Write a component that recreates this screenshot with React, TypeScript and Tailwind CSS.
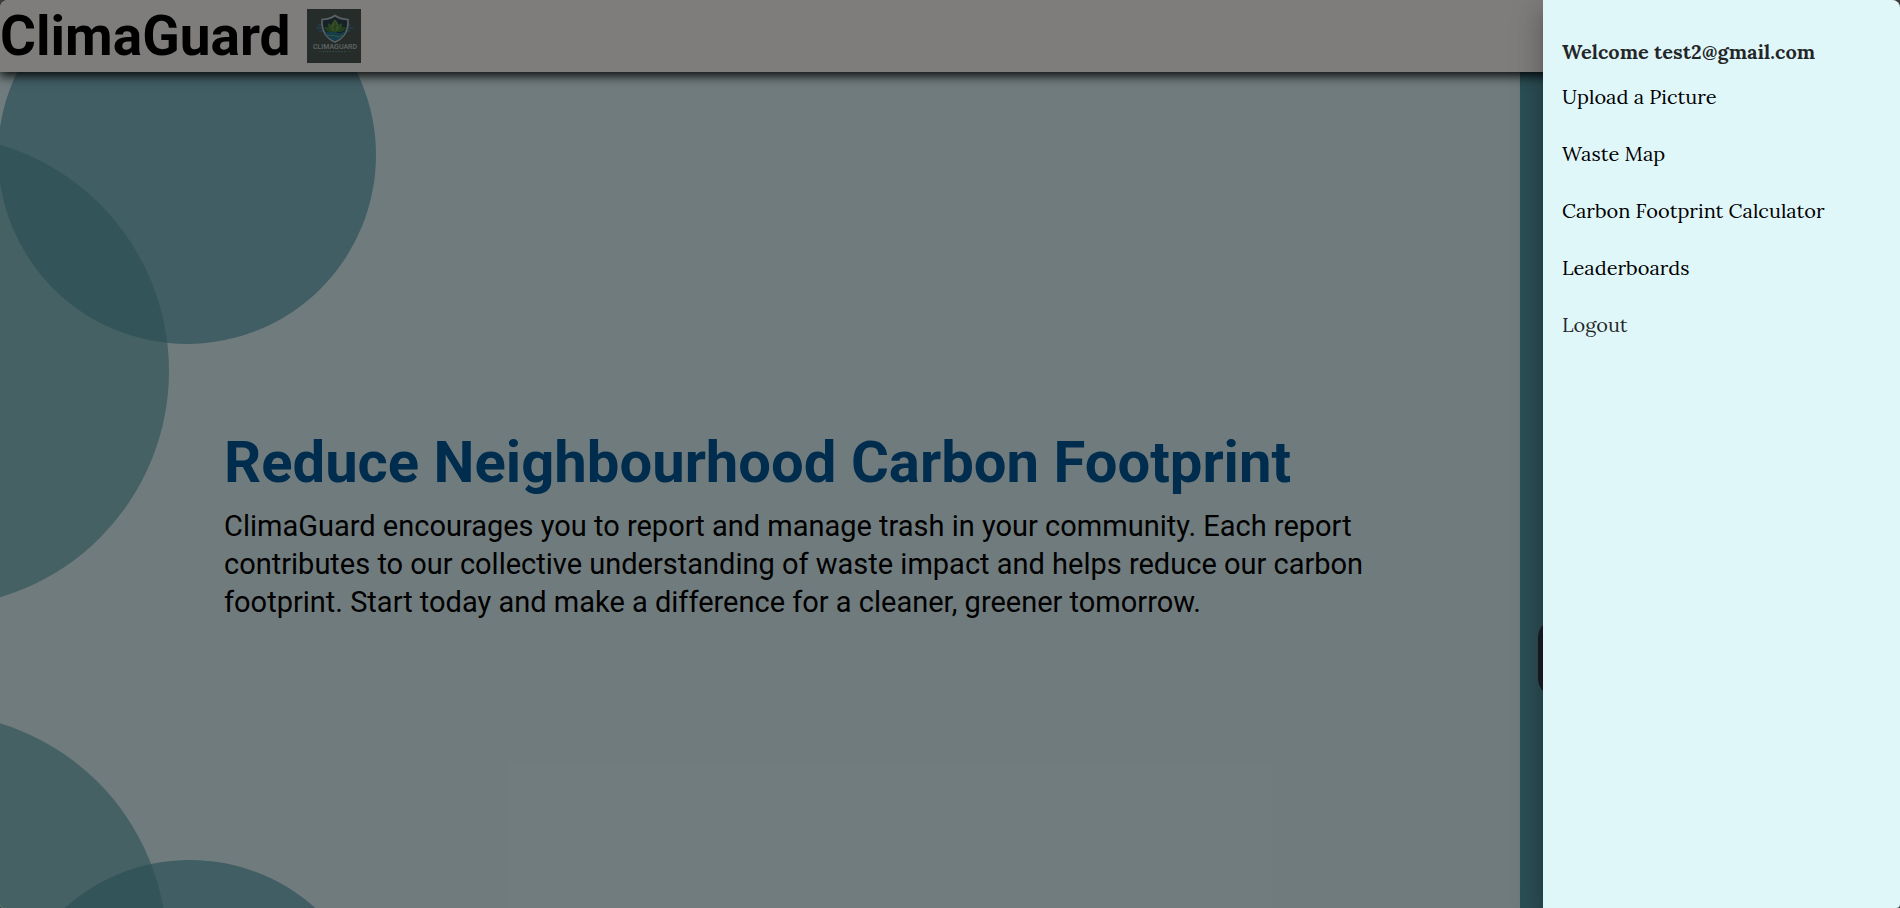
import React from 'react';

const menuItems = ['Upload a Picture', 'Waste Map', 'Carbon Footprint Calculator', 'Leaderboards'];

function Logo() {
  return (
    <svg viewBox="0 0 54 54" className="w-[54px] h-[54px]" role="img" aria-label="ClimaGuard logo">
      <rect width="54" height="54" fill="#4a5855" />
      <path d="M9 19h6M12 22h5M11 16h3M46 19h-6M43 22h-5M44 16h-3" stroke="#3f8fb8" strokeWidth="1" />
      <path d="M28 6.500c4 3 8 3.800 13 4 .6 11-3 18-13 22.500-10-4.500-13.600-11.500-13-22.500 5-.2 9-1 13-4z" fill="#2c454f" stroke="#b9c4c8" strokeWidth="1.600" />
      <path d="M17.500 22c4 3 6-1 10.500 1s6 2 10.500-1c-1.500 5-5 8-10.500 10-5.500-2-9-5-10.500-10z" fill="#2c7ba0" />
      <path d="M20 26c3 1.500 5-.5 8 1s5 1 8-1" stroke="#5fae5c" strokeWidth="1" fill="none" />
      <path d="M26.500 22.500c-4 1.500-7.500.5-9.500-4 3.500-1.500 8 0 9.500 4zM29.500 22.500c4 1.500 7.500.5 9.500-4-3.500-1.500-8 0-9.500 4z" fill="#437f3c" />
      <path d="M27 22.500c-4-.5-6-3.500-6-8 4 .5 6 4 6 8zM29 22.500c4-.5 6-3.500 6-8-4 .5-6 4-6 8z" fill="#4f8a42" />
      <path d="M28 10.500c4.500 4 5 9 0 13.500-5-4.500-4.500-9.500 0-13.500z" fill="#6f9f4c" />
      <path d="M28 13v11M28 18l2-2M28 20l-2-2" stroke="#2f5d2c" strokeWidth=".7" />
      <text x="28" y="40" textAnchor="middle" fontFamily="Roboto, sans-serif" fontSize="7" fontWeight="500" fill="#c0cacb">
        CLIMAGUARD
      </text>
      <path d="M12 42.500h3M41 42.500h3" stroke="#3f8a4d" strokeWidth="1" />
      <path d="M16 42.500h24" stroke="#6b8b98" strokeWidth="1" strokeDasharray="2 1" />
    </svg>
  );
}

function Circles() {
  return (
    <div className="absolute inset-0 overflow-hidden pointer-events-none" aria-hidden="true">
      <div className="absolute -left-[2px] -top-[106px] size-[378px] rounded-full bg-[#4395aa]/60" />
      <div className="absolute -left-[303px] top-[63px] size-[472px] rounded-full bg-[#549fa7]/60" />
      <div className="absolute left-[2px] top-[788px] size-[376px] rounded-full bg-[#4395aa]/60" />
      <div className="absolute -left-[305px] top-[641px] size-[472px] rounded-full bg-[#549fa7]/60" />
    </div>
  );
}

function Drawer() {
  return (
    <aside className="absolute inset-y-0 right-0 w-[357px] px-[19px] pt-9 bg-[#e0f7fa] font-['Lora','Liberation_Serif',serif] text-xl leading-8 shadow-[0_8px_10px_-5px_rgba(0,0,0,0.2),0_16px_24px_2px_rgba(0,0,0,0.14),0_6px_30px_5px_rgba(0,0,0,0.12)]">
      <p className="font-bold text-black/85">Welcome test2@gmail.com</p>
      <nav className="mt-[13px] flex flex-col items-start gap-[25px]">
        {menuItems.map((item) => (
          <a key={item} href="#" className="text-black">
            {item}
          </a>
        ))}
        <button type="button" className="text-black/85 cursor-pointer">
          Logout
        </button>
      </nav>
    </aside>
  );
}

export default function App() {
  return (
    <div className="h-screen bg-[#3b3b3b]">
      <div className="relative h-full overflow-hidden rounded-t-lg rounded-b-sm font-[Roboto,sans-serif]">
        <header className="relative z-10 h-[72px] flex items-center gap-4 bg-[#fffbf7] shadow-[0_4px_10px_rgba(0,0,0,0.9)]">
          <h1 className="text-[55px] leading-none font-bold text-black">ClimaGuard</h1>
          <Logo />
        </header>

        <main className="h-screen flex">
          <section className="relative w-4/5 flex flex-col justify-center pl-56 pr-36 pb-1 bg-[#e0f7fa]">
            <Circles />
            <h2 className="relative text-[58px] leading-[70px] font-bold text-[#005a9c]">
              Reduce Neighbourhood Carbon Footprint
            </h2>
            <p className="relative mt-[10px] text-[29px] leading-[38px] text-black">
              ClimaGuard encourages you to report and manage trash in your community. Each report contributes to our
              collective understanding of waste impact and helps reduce our carbon footprint. Start today and make a
              difference for a cleaner, greener tomorrow.
            </p>
          </section>
          <section className="w-1/5 flex items-center px-[18px] pt-66 bg-[#589eac]">
            <button type="button" aria-label="Report trash" className="w-full h-20 rounded-[20px] bg-[#3a3a50]" />
          </section>
        </main>

        <div className="absolute inset-0 z-20 bg-black/50">
          <Drawer />
        </div>
      </div>
    </div>
  );
}
